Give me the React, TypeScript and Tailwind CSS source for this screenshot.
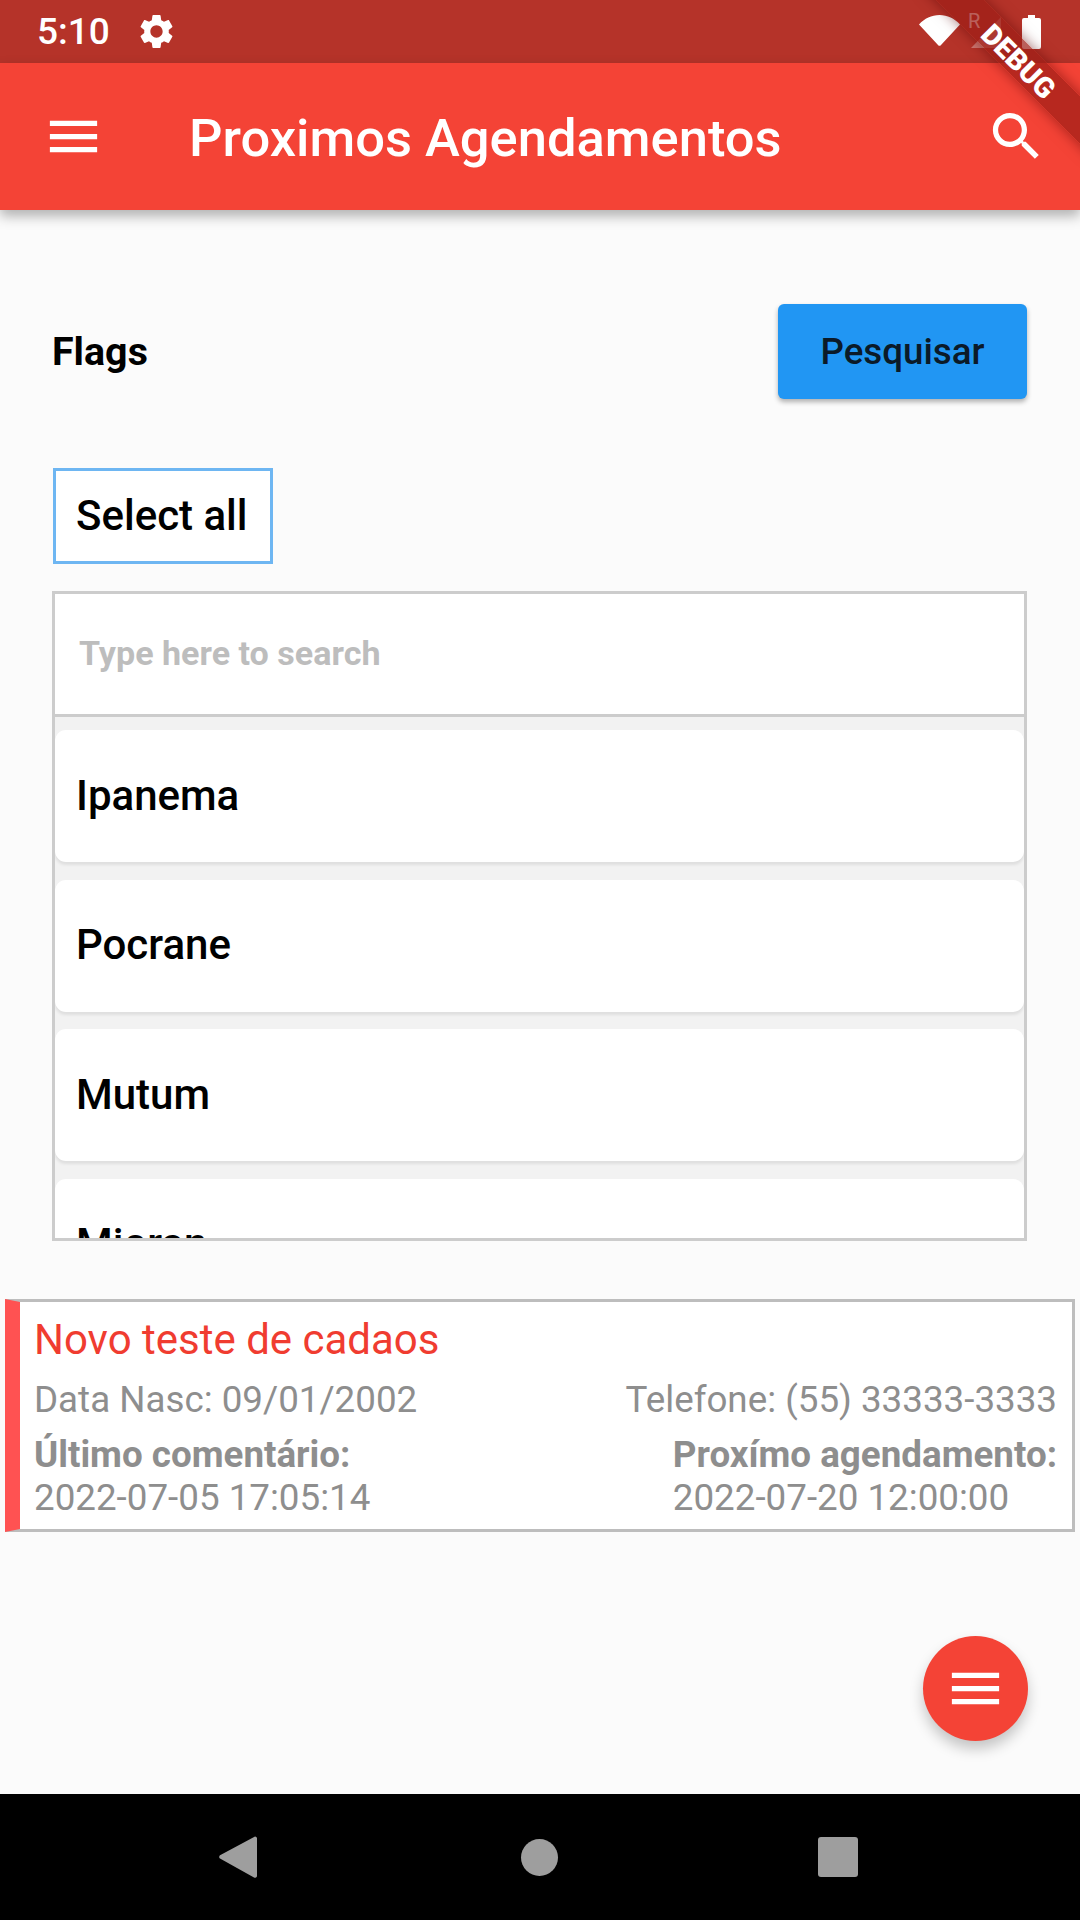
import React from "react";

const roboto = "font-['Roboto',sans-serif]";

function Menu({ className }: { className: string }) {
  return (
    <svg viewBox="0 0 24 24" className={className} fill="#fff">
      <path d="M3 18h18v-2H3v2zm0-5h18v-2H3v2zm0-7v2h18V6H3z" />
    </svg>
  );
}

function Row({ label }: { label: string }) {
  return (
    <div className="h-[132px] shrink-0 rounded-[11px] bg-white pl-[21px] pb-[2px] flex items-center text-[42px] font-medium text-black shadow-[0_3px_3px_rgba(0,0,0,0.08)] mb-[17.5px]">
      {label}
    </div>
  );
}

export default function App() {
  return (
    <div className={`${roboto} relative w-[1080px] h-[1920px] overflow-hidden flex flex-col bg-[#fbfbfb]`}>
      {/* status bar */}
      <div className="h-[63px] shrink-0 bg-[#b53329] flex items-center text-white">
        <span className="ml-[37px] text-[37px] font-medium leading-none">5:10</span>
        <svg viewBox="0 0 24 24" className="ml-[26px] w-[41px] h-[41px]" fill="#fff">
          <path d="M19.14 12.94c.04-.3.06-.61.06-.94 0-.32-.02-.64-.07-.94l2.03-1.58c.18-.14.23-.41.12-.61l-1.92-3.32c-.12-.22-.37-.29-.59-.22l-2.39.96c-.5-.38-1.03-.7-1.62-.94l-.36-2.54c-.04-.24-.24-.41-.48-.41h-3.84c-.24 0-.43.17-.47.41l-.36 2.54c-.59.24-1.13.57-1.62.94l-2.39-.96c-.22-.08-.47 0-.59.22L2.74 8.87c-.12.21-.08.47.12.61l2.03 1.58c-.05.3-.09.63-.09.94s.02.64.07.94l-2.03 1.58c-.18.14-.23.41-.12.61l1.92 3.32c.12.22.37.29.59.22l2.39-.96c.5.38 1.03.7 1.62.94l.36 2.54c.05.24.24.41.48.41h3.84c.24 0 .44-.17.47-.41l.36-2.54c.59-.24 1.13-.56 1.62-.94l2.39.96c.22.08.47 0 .59-.22l1.92-3.32c.12-.22.07-.47-.12-.61l-2.01-1.58zM12 15.6c-1.98 0-3.6-1.62-3.6-3.6s1.62-3.6 3.6-3.6 3.6 1.62 3.6 3.6-1.62 3.6-3.6 3.6z" />
        </svg>
        <div className="ml-auto flex items-center">
          <svg viewBox="0 0 41 31" className="w-[41px] h-[31px] mb-[3px]" fill="#fff">
            <path d="M0 9.5C5.5 3.5 12.5 0 20.5 0S35.5 3.5 41 9.5L22 30a2 2 0 0 1-3 0z" />
          </svg>
          <span className="ml-[8px] mb-[21px] w-[11px] text-[20px] leading-none">R</span>
          <svg viewBox="0 0 30 31" className="ml-[-8px] w-[30px] h-[31px] mt-[1px]" fill="#fff" fillOpacity="0.35">
            <path d="M30 0v31H0z" />
          </svg>
          <svg viewBox="0 0 19 34" className="ml-[21px] mr-[39px] w-[19px] h-[34px]" fill="#fff">
            <path d="M6 0h7v3h4a2 2 0 0 1 2 2v27a2 2 0 0 1-2 2H2a2 2 0 0 1-2-2V5a2 2 0 0 1 2-2h4z" />
          </svg>
        </div>
      </div>

      {/* app bar */}
      <div className="h-[147px] shrink-0 bg-[#f44336] flex items-center text-white shadow-[0_6px_12px_rgba(0,0,0,0.3)] z-10">
        <Menu className="ml-[42px] w-[63px] h-[63px]" />
        <span className="ml-[84px] pt-[3px] text-[52.5px] font-medium">Proximos Agendamentos</span>
        <svg viewBox="0 0 24 24" className="ml-auto mr-[32px] w-[63px] h-[63px]" fill="#fff">
          <path d="M15.5 14h-.79l-.28-.27C15.41 12.59 16 11.11 16 9.5 16 5.91 13.09 3 9.5 3S3 5.91 3 9.5 5.91 16 9.5 16c1.61 0 3.09-.59 4.23-1.57l.27.28v.79l5 4.99L20.49 19l-4.99-5zm-6 0C7.01 14 5 11.99 5 9.5S7.01 5 9.5 5 14 7.01 14 9.5 11.99 14 9.5 14z" />
        </svg>
      </div>

      {/* content */}
      <div className="flex-1 flex flex-col min-h-0">
        <div className="pt-[94px] pl-[52px] pr-[53px] flex items-center justify-between">
          <span className="text-[39.4px] font-bold text-black">Flags</span>
          <button className="w-[249px] h-[95px] rounded-[6px] bg-[#2196f3] text-[36.75px] font-medium text-[#0b1a28] shadow-[0_3px_5px_rgba(0,0,0,0.3)]">
            Pesquisar
          </button>
        </div>

        <div className="mt-[69px] ml-[53px] w-[220px] h-[96px] flex items-center border-[3px] border-[#6eb6f2] bg-white pl-[20px] pb-[2px] text-[42px] font-medium text-black">
          Select all
        </div>

        <div className="mt-[27px] ml-[52px] w-[975px] h-[650px] flex flex-col border-[3px] border-[#cccccc] overflow-hidden bg-[#f2f2f2]">
          <div className="h-[123px] shrink-0 bg-white border-b-[3px] border-[#cccccc] pl-[24px] flex items-center text-[34.1px] font-bold text-[#bdbdbd]">
            Type here to search
          </div>
          <div className="pt-[13px] flex flex-col">
            <Row label="Ipanema" />
            <Row label="Pocrane" />
            <Row label="Mutum" />
            <Row label="Mioran" />
          </div>
        </div>

        <div className="mt-[58px] ml-[5px] w-[1070px] h-[233px] border-[3px] border-l-[15px] border-[#bdbdbd] border-l-[#ff5252] bg-white pl-[14px] pr-[15px] pt-[14px]">
          <div className="text-[42px] leading-[48px] text-[#f03c30]">Novo teste de cadaos</div>
          <div className="mt-[14px] flex justify-between text-[36.75px] leading-[43px] text-[#8e8e8e]">
            <span>Data Nasc: 09/01/2002</span>
            <span>Telefone: (55) 33333-3333</span>
          </div>
          <div className="mt-[12px] flex justify-between text-[36.75px] leading-[43px] text-[#8e8e8e]">
            <div>
              <div className="font-bold">Último comentário:</div>
              <div>2022-07-05 17:05:14</div>
            </div>
            <div>
              <div className="font-bold">Proxímo agendamento:</div>
              <div>2022-07-20 12:00:00</div>
            </div>
          </div>
        </div>
      </div>

      {/* nav bar */}
      <div className="h-[126px] shrink-0 bg-black flex items-center pl-[219px]">
        <svg viewBox="0 0 38 42" className="w-[38px] h-[42px]" fill="#9e9e9e">
          <path d="M36 0.5a2 2 0 0 1 2 1.5v38a2 2 0 0 1-3 1.5L1 22.5a2 2 0 0 1 0-3.2z" />
        </svg>
        <div className="ml-[264px] w-[37px] h-[37px] rounded-full bg-[#9e9e9e]" />
        <div className="ml-[260px] w-[40px] h-[40px] rounded-[3px] bg-[#9e9e9e]" />
      </div>

      {/* FAB */}
      <div className="absolute left-[923px] top-[1636px] w-[105px] h-[105px] rounded-full bg-[#f44336] flex items-center justify-center shadow-[0_8px_14px_rgba(0,0,0,0.22)]">
        <Menu className="w-[63px] h-[63px]" />
      </div>

      {/* debug banner */}
      <div className="absolute left-[900px] top-[43px] w-[240px] h-[34px] pt-[7px] rotate-45 bg-[#9c1d16]/70 flex items-center justify-center text-white text-[28.5px] font-black shadow-[0_0_14px_rgba(90,0,0,0.55)] z-20">
        DEBUG
      </div>
    </div>
  );
}
